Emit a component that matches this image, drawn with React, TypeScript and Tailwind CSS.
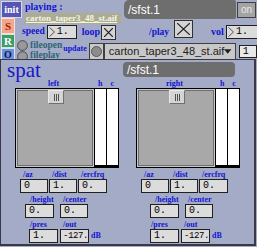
import React from "react";

const serifB = { fontFamily: '"Liberation Serif", "DejaVu Serif", serif' };
const mono = { fontFamily: '"Liberation Mono", "DejaVu Sans Mono", monospace' };
const sans = { fontFamily: '"Liberation Sans", Arial, sans-serif' };

function NumBox({ w, v, arrow, tight }: { w: string; v: string; arrow?: boolean; tight?: boolean }) {
  return (
    <div
      className={`${w} h-[14px] shrink-0 overflow-hidden border border-[#202020] bg-[#dcdcdc] flex items-center leading-none text-black ${tight ? "text-[9px] tracking-[-0.4px]" : "text-[10px]"}`}
      style={mono}
    >
      {arrow ? (
        <svg width="6" height="10" viewBox="0 0 6 10" className="ml-[1px] mr-[2px] shrink-0">
          <path d="M0.5 0.5 L5.5 5 L0.5 9.5" fill="none" stroke="#555" strokeWidth="1" />
        </svg>
      ) : (
        <span className={`${tight ? "w-[2px]" : "w-[3px]"} shrink-0`} />
      )}
      <span className="whitespace-nowrap">{v}</span>
    </div>
  );
}

function Toggle({ w, h }: { w: string; h: string }) {
  return (
    <div className={`${w} ${h} shrink-0 border border-[#303030] bg-[#d4d4d4] p-[2px]`}>
      <svg viewBox="0 0 10 10" preserveAspectRatio="none" className="w-full h-full">
        <path d="M0 0 L10 10 M10 0 L0 10" stroke="#202020" strokeWidth="1.2" vectorEffect="non-scaling-stroke" />
      </svg>
    </div>
  );
}

function RoundBtn() {
  return (
    <div className="w-[11px] h-[11px] shrink-0 rounded-full bg-[#8c8c8c] border border-[#5a5a5a] flex items-center justify-center">
      <div className="w-[7px] h-[7px] rounded-full bg-[#9a9a9a]" />
    </div>
  );
}

function Label({ children, className = "" }: { children: React.ReactNode; className?: string }) {
  return (
    <span className={`text-[8px] font-bold leading-none text-[#1414d0] whitespace-nowrap ${className}`} style={serifB}>
      {children}
    </span>
  );
}

function Pad({ name }: { name: string }) {
  return (
    <div className="flex flex-col">
      <div className="h-[8px] flex items-end">
        <Label className={name === "left" ? "ml-[33px]" : "ml-[30px]"}>{name}</Label>
        <Label className={name === "left" ? "ml-[39px]" : "ml-[37px]"}>h</Label>
        <Label className="ml-[8px]">c</Label>
      </div>
      <div className="flex">
        <div className="w-[80px] h-[80px] border border-black bg-[#c8c8c8] p-[1px]">
          <div className="w-full h-full border border-[#6e6e6e] bg-[#a8a8a8] relative">
            <div className="absolute left-[30px] top-[-1px] w-[16px] h-[14px] bg-[#d4d4d4] border border-[#e8e8e8] border-r-[#707070] border-b-[#707070] flex items-center justify-center gap-[1px]">
              <div className="w-[1px] h-[7px] bg-[#505050]" />
              <div className="w-[1px] h-[7px] bg-[#505050]" />
              <div className="w-[1px] h-[7px] bg-[#505050]" />
            </div>
          </div>
        </div>
        <div className="w-[12px] h-[80px] border-y border-r border-black border-b-[3px] bg-white" />
        <div className="w-[12px] h-[80px] border-y border-r border-black border-b-[3px] bg-white" />
      </div>
    </div>
  );
}

function Params({ side }: { side: "l" | "r" }) {
  const L = side === "l";
  return (
    <div className="flex flex-col">
      <div className="flex mt-[3px] ml-[5px]">
        <div className="flex flex-col w-[29px]">
          <Label className="ml-[3px] h-[7px]">/az</Label>
          <div className="mt-[1px]"><NumBox w="w-[28px]" v="0" /></div>
        </div>
        <div className="flex flex-col w-[29px]">
          <Label className="ml-[3px] h-[7px]">/dist</Label>
          <div className="mt-[1px]"><NumBox w="w-[28px]" v="1." /></div>
        </div>
        <div className="flex flex-col w-[29px]">
          <Label className="ml-[3px] h-[7px]">/ercfrq</Label>
          <div className="mt-[1px]"><NumBox w="w-[29px]" v="0." /></div>
        </div>
      </div>
      <div className={`flex mt-[3px] ${L ? "ml-[10px]" : "ml-[14px]"}`}>
        <div className="flex flex-col w-[35px]">
          <Label className="ml-[5px] h-[7px]">/height</Label>
          <div className="mt-[1px]"><NumBox w="w-[29px]" v="0." /></div>
        </div>
        <div className="flex flex-col w-[30px]">
          <Label className="ml-[3px] h-[7px]">/center</Label>
          <div className="mt-[1px]"><NumBox w="w-[28px]" v="0." /></div>
        </div>
      </div>
      <div className="flex mt-[3px] ml-[14px]">
        <div className="flex flex-col w-[31px]">
          <Label className="ml-[1px] h-[7px]">/pres</Label>
          <div className="mt-[1px]"><NumBox w="w-[29px]" v="1." /></div>
        </div>
        <div className="flex flex-col">
          <Label className="ml-[3px] h-[7px]">/out</Label>
          <div className="mt-[1px] flex items-end">
            <NumBox w="w-[29px]" v="-127." tight />
            <Label className="ml-[2px] mb-[3px]">dB</Label>
          </div>
        </div>
      </div>
    </div>
  );
}

export default function App() {
  return (
    <div className="w-[257px] h-[247px] bg-[#a3abc7] overflow-hidden">
      {/* top section */}
      <div className="h-[59px] overflow-hidden flex">
        <div className="w-[16px] shrink-0 flex flex-col pl-[1px] pt-[1px]">
          <div className="w-[21px] h-[17px] shrink-0 bg-[#5656b4] border border-[#d8d8ec] flex items-center justify-center text-white text-[10px] font-bold leading-none" style={serifB}>
            init
          </div>
          <div className="w-[14px] h-[16px] shrink-0 bg-[#f2a888] border border-[#f8e0d8] flex items-center justify-center text-[#a01818] text-[11px] font-bold leading-none" style={serifB}>
            S
          </div>
          <div className="w-[14px] h-[14px] shrink-0 bg-[#3f9c68] border border-[#d0e8d8] flex items-center justify-center text-white text-[11px] font-bold leading-none" style={serifB}>
            R
          </div>
          <div className="w-[14px] h-[11px] shrink-0 bg-[#6c92dc] border border-[#dce4f4] border-b-0 flex items-center justify-center text-[#101050] text-[10px] font-bold leading-[9px]" style={serifB}>
            O
          </div>
        </div>
        <div className="flex-1 flex flex-col">
          {/* row A */}
          <div className="h-[20px] flex items-start">
            <div className="ml-[8px] w-[97px] shrink-0 flex flex-col">
              <span className="ml-[1px] mt-[2px] h-[11px] text-[10px] font-bold leading-none text-[#1414d0]" style={serifB}>playing :</span>
              <div className="w-[97px] h-[11px] bg-[#acac94] flex items-center pl-[2px] text-[9px] font-bold leading-none text-[#f4f4e0] underline" style={serifB}>
                carton_taper3_48_st.aif
              </div>
            </div>
            <div className="ml-[3px] w-[112px] h-[19px] shrink-0 bg-[#6e6e6e] rounded-l-[5px] rounded-r-[2px] flex items-center pl-[4px] text-white text-[12px] leading-none" style={sans}>
              /sfst.1
            </div>
            <div className="ml-[1px] mt-[2px] w-[19px] h-[16px] shrink-0 bg-[#a4a4a4] border border-[#404040] flex items-center justify-center text-[#e8e8e8] text-[10px] leading-none" style={sans}>
              on
            </div>
          </div>
          {/* row B */}
          <div className="h-[20px] flex items-start">
            <span className="ml-[6px] mt-[7px] text-[9.5px] font-bold leading-none text-[#1414d0]" style={serifB}>speed</span>
            <div className="ml-[2px] mt-[5px]"><NumBox w="w-[30px]" v="1." arrow /></div>
            <span className="ml-[5px] mt-[7px] text-[10px] font-bold leading-none text-[#1414d0]" style={serifB}>loop</span>
            <div className="ml-[1px] mt-[5px]"><Toggle w="w-[15px]" h="h-[15px]" /></div>
            <span className="ml-[33px] mt-[8px] text-[9.5px] font-bold leading-none text-[#1414d0]" style={serifB}>/play</span>
            <div className="ml-[5px]"><Toggle w="w-[19px]" h="h-[18px]" /></div>
            <span className="ml-[18px] mt-[7px] text-[10px] font-bold leading-none text-[#1414d0]" style={serifB}>vol</span>
            <div className="ml-[2px] mt-[5px]"><NumBox w="w-[33px]" v="1." arrow /></div>
          </div>
          {/* row C */}
          <div className="h-[19px] flex items-start">
            <div className="ml-[1px] flex flex-col">
              <div className="flex items-center h-[11px]">
                <RoundBtn />
                <span className="ml-[2px] text-[9.5px] font-bold leading-[9px] text-[#2e6474]" style={serifB}>fileopen</span>
              </div>
              <div className="flex items-start h-[8px]">
                <RoundBtn />
                <span className="ml-[2px] text-[9.5px] font-bold leading-[8px] text-[#2e6474]" style={serifB}>fileplay</span>
              </div>
            </div>
            <span className="ml-[1px] mt-[5px] text-[8px] font-bold leading-none text-[#1414d0]" style={serifB}>update</span>
            <div className="ml-[2px] mt-[3px] w-[15px] h-[16px] shrink-0 bg-[#c8c8c8] border border-[#404040] border-b-0 flex items-center justify-center">
              <div className="w-[11px] h-[11px] rounded-full bg-[#8c8c8c] border border-[#5a5a5a]" />
            </div>
            <div className="mt-[3px] w-[132px] h-[16px] shrink-0 bg-[#c8c8c8] border border-[#404040] border-b-0 flex items-center pl-[4px] text-[11px] leading-none text-[#202020]" style={sans}>
              <span>carton_taper3_48_st.aif</span>
              <svg width="8" height="6" viewBox="0 0 8 6" className="ml-auto mr-[3px]">
                <path d="M0 0 L8 0 L4 5 Z" fill="#202020" />
              </svg>
            </div>
            <div className="ml-[3px] mt-[5px] w-[18px] h-[13px] shrink-0 bg-[#e8e8e8] border border-[#202020] flex items-center pl-[3px] text-[10px] leading-none text-black" style={mono}>
              1
            </div>
          </div>
        </div>
      </div>
      {/* panel */}
      <div className="w-[256px] h-[187px] border border-[#383848] border-r-[2px] border-b-[2px] bg-[#a3abc7] flex flex-col">
        <div className="h-[20px] flex items-start">
          <span className="ml-[6px] mt-[1px] w-[34px] h-[19px] text-[21px] leading-[19px] text-[#1818c8]" style={serifB}>spat</span>
          <div className="ml-[82px] mt-[2px] w-[112px] h-[15px] bg-[#6e6e6e] rounded-[4px] flex items-center pl-[4px] text-white text-[12px] leading-none" style={sans}>
            /sfst.1
          </div>
        </div>
        <div className="flex">
          <div className="ml-[14px] flex flex-col">
            <Pad name="left" />
            <Params side="l" />
          </div>
          <div className="ml-[17px] flex flex-col">
            <Pad name="right" />
            <Params side="r" />
          </div>
        </div>
      </div>
    </div>
  );
}
